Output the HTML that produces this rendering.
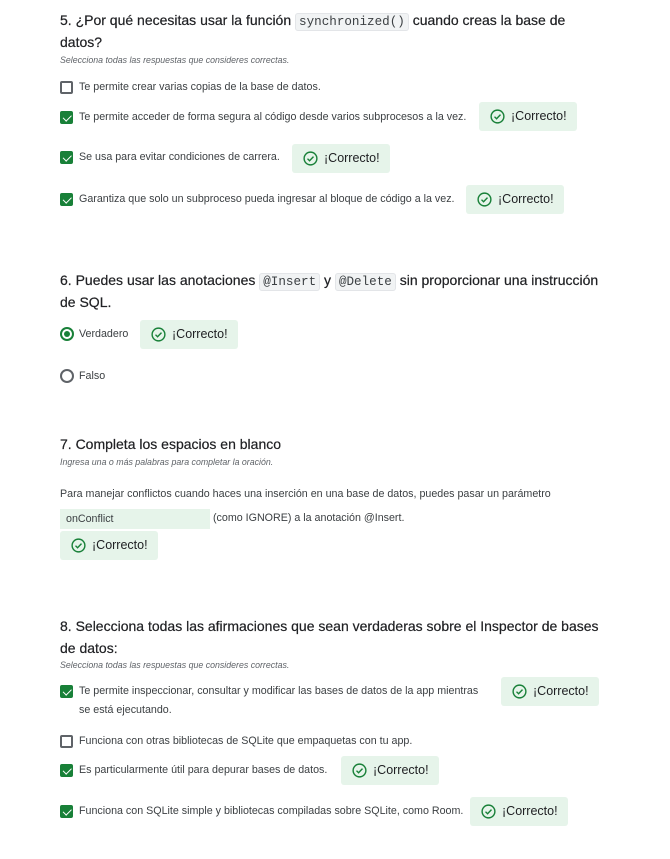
<!DOCTYPE html>
<html><head><meta charset="utf-8"><style>
*{margin:0;padding:0;box-sizing:border-box}
body{width:670px;height:859px;background:#fff;position:relative;font-family:"Liberation Sans",Arial,sans-serif;color:#202124;overflow:hidden}
.a{position:absolute;white-space:nowrap}
.t{font-size:14px;line-height:22px;color:#202124;-webkit-text-stroke:0.2px #202124}
.s{font-size:8.8px;font-style:italic;color:#5f6368;line-height:10px}
.o{font-size:10.7px;color:#3c4043;line-height:14px}
code{font-family:"Liberation Mono",monospace;font-size:12.6px;background:#f1f3f4;border:1px solid #e3e5e8;border-radius:3px;padding:1px 3px;color:#3c4043;-webkit-text-stroke:0}
.cb{position:absolute;width:13px;height:13px;border:2px solid #5f6368;border-radius:2px}
.cb.on{background:#188038;border-color:#188038}
.cb.on::after{content:"";position:absolute;left:2.5px;top:0px;width:3.5px;height:6.5px;border:solid #fff;border-width:0 1.8px 1.8px 0;transform:rotate(45deg)}
.b{position:absolute;background:#e6f4ea;border-radius:3px;height:29px;font-size:12.5px;color:#202124;line-height:29px;padding-left:32px;width:98px}
.b svg{position:absolute;left:11px;top:7px}
.r{position:absolute;width:14px;height:14px;border:2px solid #5f6368;border-radius:50%}
.r.on{border-color:#188038}
.r.on::after{content:"";position:absolute;left:2px;top:2px;width:6px;height:6px;border-radius:50%;background:#188038}
</style></head><body>
<div class="a t" style="left:60px;top:9px">5. ¿Por qué necesitas usar la función <code>synchronized()</code> cuando creas la base de</div>
<div class="a t" style="left:60px;top:31px">datos?</div>
<div class="a s" style="left:60px;top:55px">Selecciona todas las respuestas que consideres correctas.</div>

<div class="cb" style="left:60px;top:81px"></div><div class="a o" style="left:79px;top:80px">Te permite crear varias copias de la base de datos.</div>
<div class="cb on" style="left:60px;top:111px"></div><div class="a o" style="left:79px;top:110px">Te permite acceder de forma segura al código desde varios subprocesos a la vez.</div>
<div class="b" style="left:479px;top:102px"><svg width="15" height="15" viewBox="0 0 16 16"><circle cx="8" cy="8" r="6.8" fill="none" stroke="#188038" stroke-width="1.5"/><path d="M4.8 8.2l2.2 2.2 4.2-4.4" fill="none" stroke="#188038" stroke-width="1.5"/></svg>¡Correcto!</div>
<div class="cb on" style="left:60px;top:151px"></div><div class="a o" style="left:79px;top:150px">Se usa para evitar condiciones de carrera.</div>
<div class="b" style="left:292px;top:144px"><svg width="15" height="15" viewBox="0 0 16 16"><circle cx="8" cy="8" r="6.8" fill="none" stroke="#188038" stroke-width="1.5"/><path d="M4.8 8.2l2.2 2.2 4.2-4.4" fill="none" stroke="#188038" stroke-width="1.5"/></svg>¡Correcto!</div>
<div class="cb on" style="left:60px;top:193px"></div><div class="a o" style="left:79px;top:192px">Garantiza que solo un subproceso pueda ingresar al bloque de código a la vez.</div>
<div class="b" style="left:466px;top:185px"><svg width="15" height="15" viewBox="0 0 16 16"><circle cx="8" cy="8" r="6.8" fill="none" stroke="#188038" stroke-width="1.5"/><path d="M4.8 8.2l2.2 2.2 4.2-4.4" fill="none" stroke="#188038" stroke-width="1.5"/></svg>¡Correcto!</div>

<div class="a t" style="left:60px;top:269px">6. Puedes usar las anotaciones <code>@Insert</code> y <code>@Delete</code> sin proporcionar una instrucción</div>
<div class="a t" style="left:60px;top:291px">de SQL.</div>
<div class="r on" style="left:60px;top:327px"></div><div class="a o" style="left:79px;top:327px">Verdadero</div>
<div class="b" style="left:140px;top:320px"><svg width="15" height="15" viewBox="0 0 16 16"><circle cx="8" cy="8" r="6.8" fill="none" stroke="#188038" stroke-width="1.5"/><path d="M4.8 8.2l2.2 2.2 4.2-4.4" fill="none" stroke="#188038" stroke-width="1.5"/></svg>¡Correcto!</div>
<div class="r" style="left:60px;top:369px"></div><div class="a o" style="left:79px;top:369px">Falso</div>

<div class="a t" style="left:60px;top:433px">7. Completa los espacios en blanco</div>
<div class="a s" style="left:60px;top:457px">Ingresa una o más palabras para completar la oración.</div>
<div class="a o" style="left:60px;top:487px">Para manejar conflictos cuando haces una inserción en una base de datos, puedes pasar un parámetro</div>
<div class="a o" style="left:60px;top:509px;width:150px;height:20px;background:#e6f4ea;padding-left:6px;line-height:20px">onConflict</div>
<div class="a o" style="left:213px;top:511px">(como IGNORE) a la anotación @Insert.</div>
<div class="b" style="left:60px;top:531px"><svg width="15" height="15" viewBox="0 0 16 16"><circle cx="8" cy="8" r="6.8" fill="none" stroke="#188038" stroke-width="1.5"/><path d="M4.8 8.2l2.2 2.2 4.2-4.4" fill="none" stroke="#188038" stroke-width="1.5"/></svg>¡Correcto!</div>

<div class="a t" style="left:60px;top:615px">8. Selecciona todas las afirmaciones que sean verdaderas sobre el Inspector de bases</div>
<div class="a t" style="left:60px;top:637px">de datos:</div>
<div class="a s" style="left:60px;top:660px">Selecciona todas las respuestas que consideres correctas.</div>
<div class="cb on" style="left:60px;top:685px"></div><div class="a o" style="left:79px;top:684px">Te permite inspeccionar, consultar y modificar las bases de datos de la app mientras</div>
<div class="a o" style="left:79px;top:703px">se está ejecutando.</div>
<div class="b" style="left:501px;top:677px"><svg width="15" height="15" viewBox="0 0 16 16"><circle cx="8" cy="8" r="6.8" fill="none" stroke="#188038" stroke-width="1.5"/><path d="M4.8 8.2l2.2 2.2 4.2-4.4" fill="none" stroke="#188038" stroke-width="1.5"/></svg>¡Correcto!</div>
<div class="cb" style="left:60px;top:735px"></div><div class="a o" style="left:79px;top:734px">Funciona con otras bibliotecas de SQLite que empaquetas con tu app.</div>
<div class="cb on" style="left:60px;top:764px"></div><div class="a o" style="left:79px;top:763px">Es particularmente útil para depurar bases de datos.</div>
<div class="b" style="left:341px;top:756px"><svg width="15" height="15" viewBox="0 0 16 16"><circle cx="8" cy="8" r="6.8" fill="none" stroke="#188038" stroke-width="1.5"/><path d="M4.8 8.2l2.2 2.2 4.2-4.4" fill="none" stroke="#188038" stroke-width="1.5"/></svg>¡Correcto!</div>
<div class="cb on" style="left:60px;top:805px"></div><div class="a o" style="left:79px;top:804px">Funciona con SQLite simple y bibliotecas compiladas sobre SQLite, como Room.</div>
<div class="b" style="left:470px;top:797px"><svg width="15" height="15" viewBox="0 0 16 16"><circle cx="8" cy="8" r="6.8" fill="none" stroke="#188038" stroke-width="1.5"/><path d="M4.8 8.2l2.2 2.2 4.2-4.4" fill="none" stroke="#188038" stroke-width="1.5"/></svg>¡Correcto!</div>
</body></html>
